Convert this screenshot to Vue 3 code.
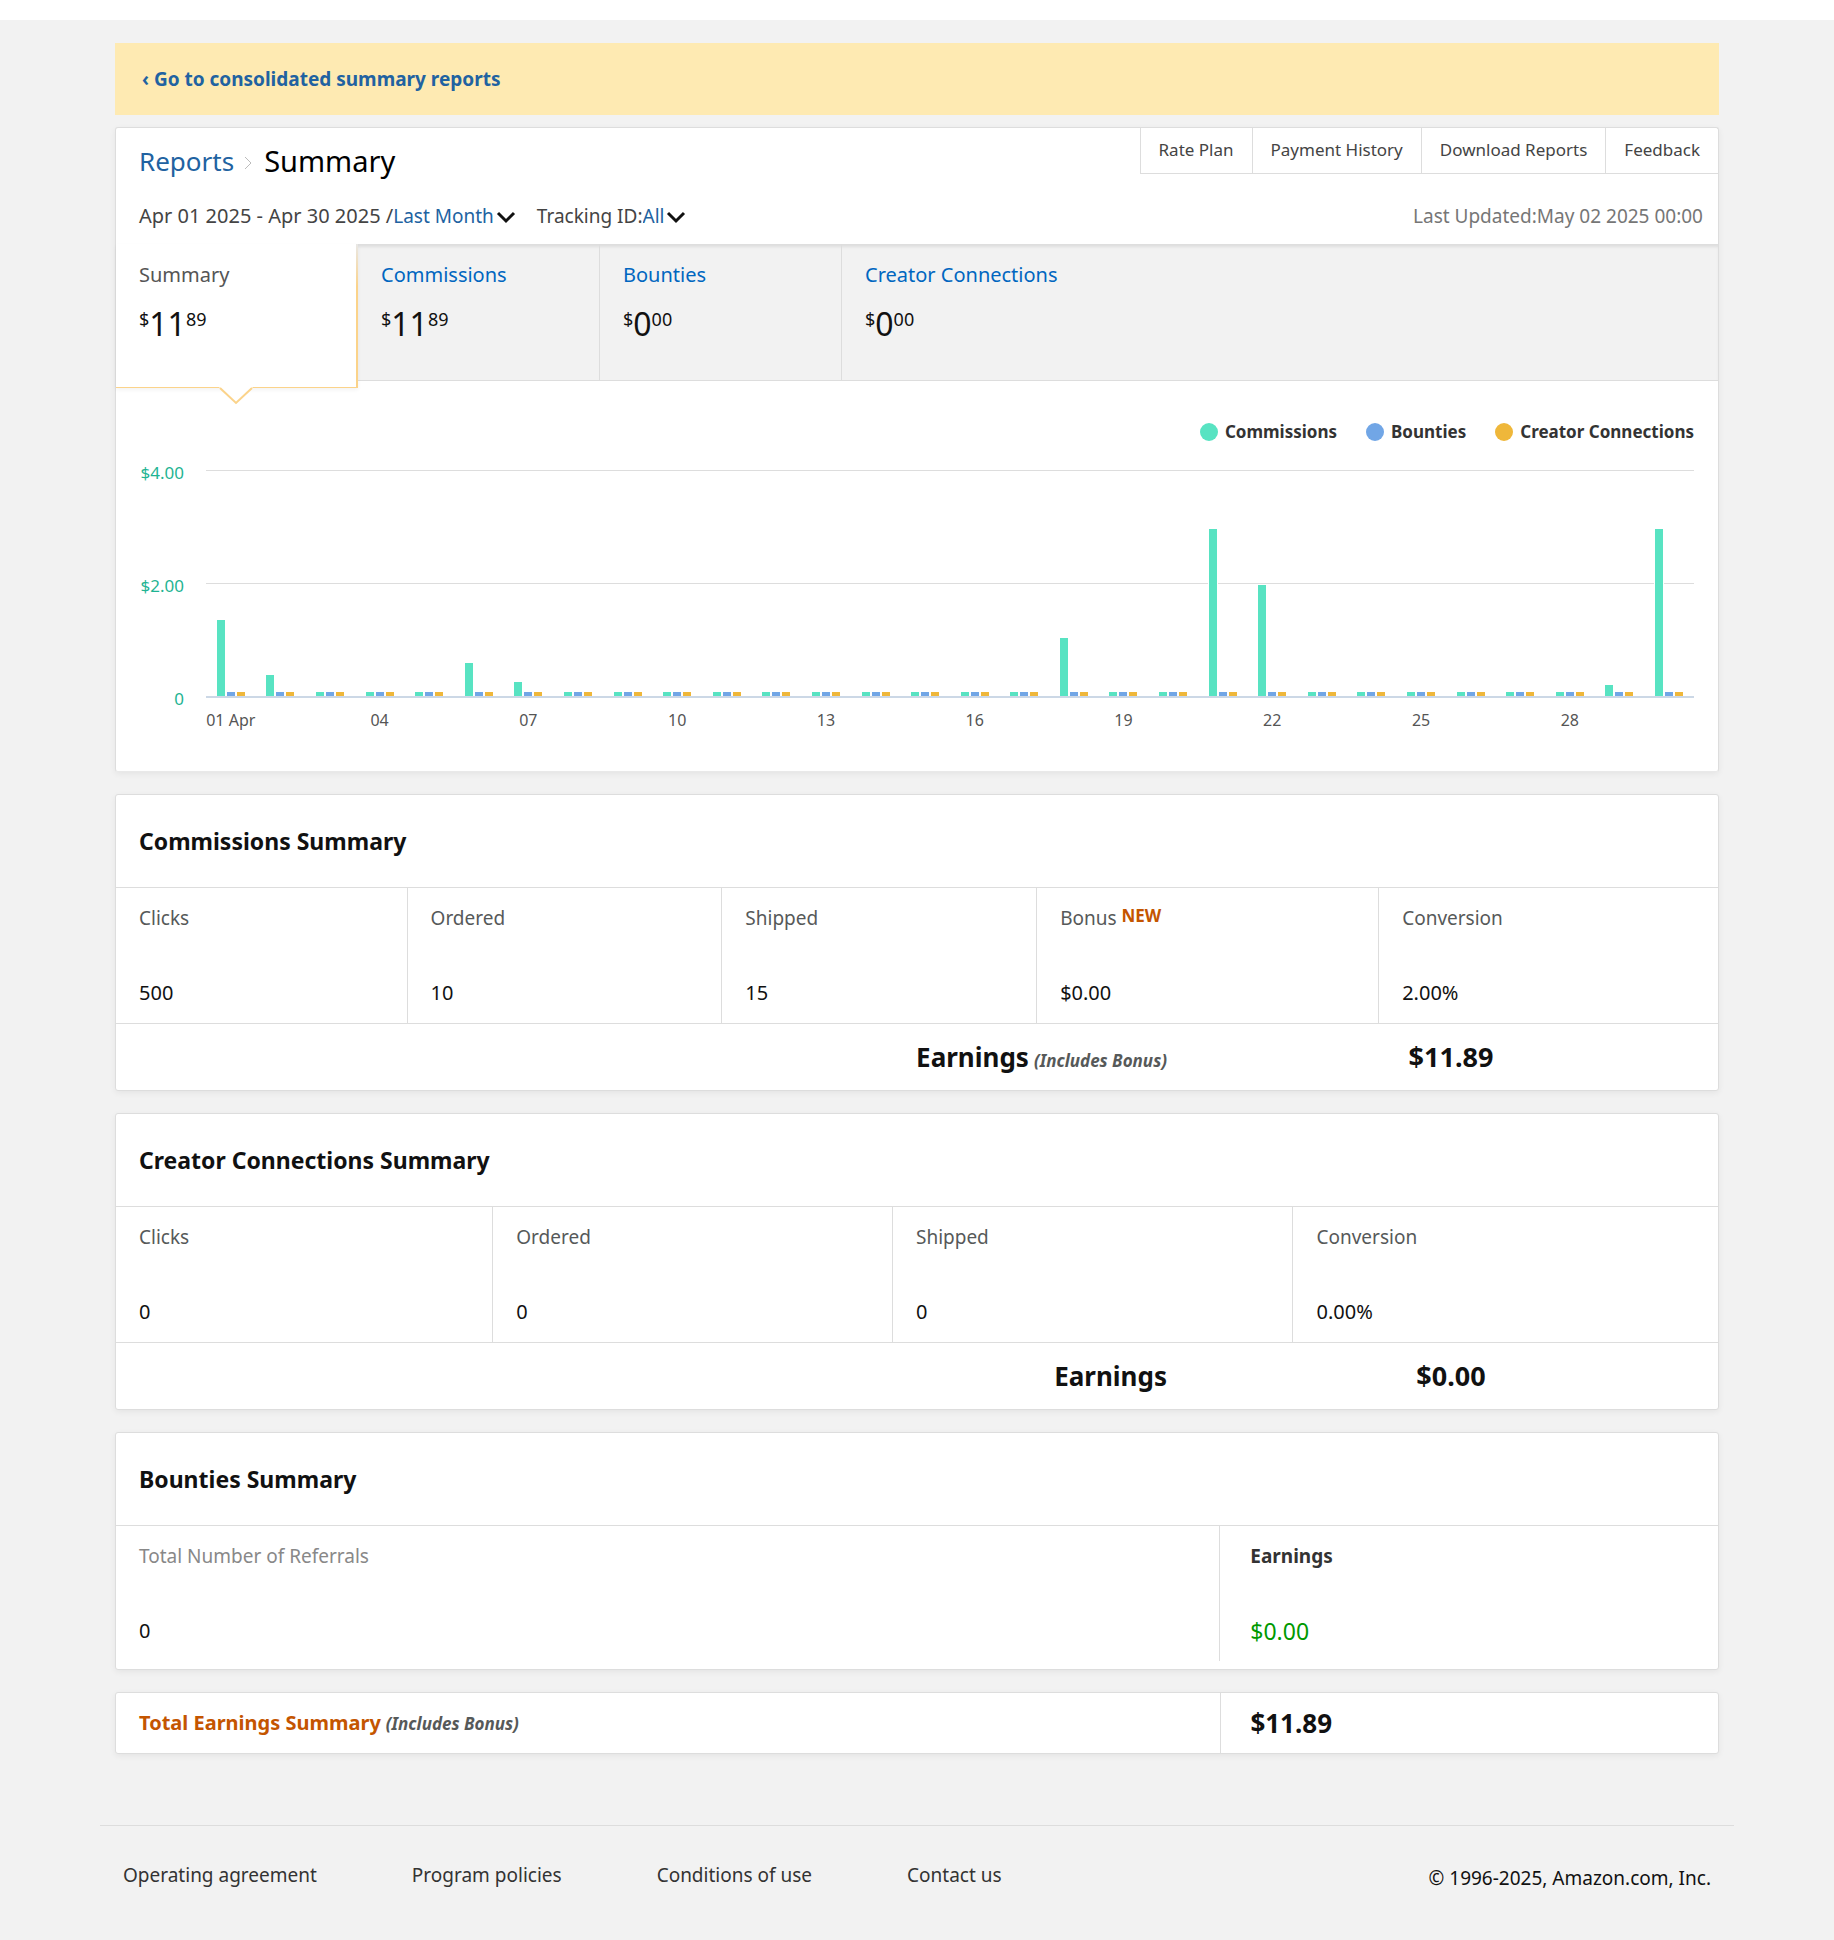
<template>
  <div class="page">
    <div class="banner">
      <a href="#">‹ Go to consolidated summary reports</a>
    </div>

    <section class="card report">
      <div class="report-header">
        <h1 class="breadcrumb">
          <a href="#">Reports</a>
          <svg class="separator" viewBox="0 0 8 14" width="8" height="14">
            <path d="M1 1 L7 7 L1 13" fill="none" stroke="#bbb" stroke-width="1" />
          </svg>
          <span>Summary</span>
        </h1>
        <nav class="report-nav">
          <a v-for="item in navItems" :key="item" href="#">{{ item }}</a>
        </nav>
      </div>

      <div class="filters">
        <label for="period" class="period-label">Apr 01 2025 - Apr 30 2025 /</label>
        <select id="period" v-model="period">
          <option>Last Month</option>
          <option>Yesterday</option>
        </select>
        <svg class="chevron" viewBox="0 0 20 14" width="20" height="14">
          <path d="M2 2 L10 10 L18 2" />
        </svg>
        <label for="tracking" class="tracking-label">Tracking ID:</label>
        <select id="tracking" v-model="trackingId">
          <option>All</option>
        </select>
        <svg class="chevron" viewBox="0 0 20 14" width="20" height="14">
          <path d="M2 2 L10 10 L18 2" />
        </svg>
        <span class="updated">Last Updated:May 02 2025 00:00</span>
      </div>

      <div class="tabs">
        <a
          v-for="tab in tabs"
          :key="tab.label"
          href="#"
          class="tab"
          :class="{ active: tab.label === activeTab }"
          @click.prevent="activeTab = tab.label"
        >
          <span class="tab-label">{{ tab.label }}</span>
          <span class="amount">
            <span class="small">$</span><span>{{ tab.whole }}</span><span class="small">{{ tab.cents }}</span>
          </span>
          <svg v-if="tab.label === activeTab" class="pointer" viewBox="0 0 34 18" width="34" height="18">
            <path d="M0 0 L17 17 L34 0 Z" fill="#fff" />
            <path d="M1 1 L17 16 L33 1" fill="none" stroke="#fbd38a" stroke-width="2" />
          </svg>
        </a>
      </div>

      <div class="chart">
        <ul class="legend">
          <li v-for="s in series" :key="s.name">
            <span class="dot" :class="s.color"></span>{{ s.name }}
          </li>
        </ul>
        <div class="chart-body">
          <div class="y-axis">
            <span>$4.00</span>
            <span>$2.00</span>
            <span>0</span>
          </div>
          <div class="plot">
            <div class="bars">
              <div v-for="(value, i) in dailyCommissions" :key="i" class="day">
                <span class="bar green" :style="{ height: barHeight(value) }"></span>
                <span class="bar blue"></span>
                <span class="bar yellow"></span>
              </div>
            </div>
          </div>
          <div class="x-axis">
            <span v-for="(value, i) in dailyCommissions" :key="i">{{ dayLabel(i) }}</span>
          </div>
        </div>
      </div>
    </section>

    <section v-for="summary in summaries" :key="summary.title" class="card">
      <h2>{{ summary.title }}</h2>
      <table>
        <colgroup>
          <col v-for="c in summary.columns" :key="c.label" :style="{ width: c.width }" />
        </colgroup>
        <thead>
          <tr>
            <th v-for="c in summary.columns" :key="c.label" scope="col">
              {{ c.label }} <span v-if="c.isNew" class="new">NEW</span>
            </th>
          </tr>
        </thead>
        <tbody>
          <tr>
            <td v-for="c in summary.columns" :key="c.label">{{ c.value }}</td>
          </tr>
        </tbody>
      </table>
      <div class="earnings">
        <div class="earnings-label">Earnings<em v-if="summary.bonus">(Includes Bonus)</em></div>
        <div class="earnings-value">{{ summary.earnings }}</div>
      </div>
    </section>

    <section class="card bounties">
      <h2>Bounties Summary</h2>
      <table>
        <thead>
          <tr>
            <th scope="col" class="referrals">Total Number of Referrals</th>
            <th scope="col" class="bounty-earnings">Earnings</th>
          </tr>
        </thead>
        <tbody>
          <tr>
            <td>0</td>
            <td class="bounty-value">$0.00</td>
          </tr>
        </tbody>
      </table>
    </section>

    <section class="card total">
      <div class="total-label">Total Earnings Summary<em>(Includes Bonus)</em></div>
      <div class="total-value">$11.89</div>
    </section>

    <footer>
      <nav>
        <a v-for="link in footerLinks" :key="link" href="#">{{ link }}</a>
      </nav>
      <span class="copyright">© 1996-2025, Amazon.com, Inc.</span>
    </footer>
  </div>
</template>

<script setup>
import { ref } from 'vue'

const period = ref('Last Month')
const trackingId = ref('All')
const activeTab = ref('Summary')

const navItems = ['Rate Plan', 'Payment History', 'Download Reports', 'Feedback']
const footerLinks = ['Operating agreement', 'Program policies', 'Conditions of use', 'Contact us']

const tabs = [
  { label: 'Summary', whole: '11', cents: '89' },
  { label: 'Commissions', whole: '11', cents: '89' },
  { label: 'Bounties', whole: '0', cents: '00' },
  { label: 'Creator Connections', whole: '0', cents: '00' }
]

const series = [
  { name: 'Commissions', color: 'green' },
  { name: 'Bounties', color: 'blue' },
  { name: 'Creator Connections', color: 'yellow' }
]

const dailyCommissions = [
  1.34, 0.38, 0, 0, 0, 0.59, 0.25, 0, 0, 0, 0, 0, 0, 0, 0,
  0, 0, 1.02, 0, 0, 2.95, 1.97, 0, 0, 0, 0, 0, 0, 0.19, 2.95
]
const maxValue = 4

const barHeight = (value) => `${(value / maxValue) * 100}%`

// one label every three days, the first one carries the month
const dayLabel = (i) => {
  if (i % 3 !== 0) return ''
  const day = String(i + 1).padStart(2, '0')
  return i === 0 ? `${day} Apr` : day
}

const summaries = [
  {
    title: 'Commissions Summary',
    earnings: '$11.89',
    bonus: true,
    columns: [
      { label: 'Clicks', value: '500', width: '18.2%' },
      { label: 'Ordered', value: '10', width: '19.65%' },
      { label: 'Shipped', value: '15', width: '19.65%' },
      { label: 'Bonus', value: '$0.00', width: '21.35%', isNew: true },
      { label: 'Conversion', value: '2.00%', width: '21.15%' }
    ]
  },
  {
    title: 'Creator Connections Summary',
    earnings: '$0.00',
    bonus: false,
    columns: [
      { label: 'Clicks', value: '0', width: '23.55%' },
      { label: 'Ordered', value: '0', width: '24.95%' },
      { label: 'Shipped', value: '0', width: '25%' },
      { label: 'Conversion', value: '0.00%', width: '26.5%' }
    ]
  }
]
</script>

<style>
body {
  margin: 0;
  background: #f2f2f2;
}
</style>

<style scoped>
.page {
  border-top: 20px solid #fff;
  padding: 23px 100px 52px;
  font-family: 'Noto Sans', 'Open Sans', sans-serif;
  font-size: 19px;
  line-height: 26px;
  color: #111;
}

a {
  color: #2162a1;
  text-decoration: none;
}

.banner {
  margin: 0 15px 12px;
  padding: 23px 27px;
  background: #feeab2;
  font-weight: bold;
}

.card {
  margin: 0 15px 22px;
  background: #fff;
  border: 1px solid #ddd;
  border-radius: 3px;
  box-shadow: 0 2px 6px rgba(0, 0, 0, 0.06);
}

.report {
  border-bottom-color: #e9e9e9;
}

.report-header {
  display: flex;
  justify-content: space-between;
  align-items: flex-start;
}

.breadcrumb {
  display: flex;
  align-items: center;
  margin: 13px 0 0 23px;
  font-size: 29px;
  font-weight: normal;
  line-height: 40px;
  color: #000;
}

.breadcrumb a {
  font-size: 26px;
}

.separator {
  margin: 3px 12px 0 10px;
}

.report-nav {
  display: flex;
  border-left: 1px solid #ddd;
  border-bottom: 1px solid #ddd;
}

.report-nav a {
  padding: 9px 18px 10px;
  font-size: 17px;
  color: #444;
}

.report-nav a + a {
  border-left: 1px solid #ddd;
}

.filters {
  display: flex;
  align-items: center;
  padding: 20px 15px 13px 23px;
  line-height: 30px;
  color: #444;
}

.filters select {
  appearance: none;
  field-sizing: content;
  border: none;
  padding: 0;
  background: transparent;
  font: inherit;
  color: #2162a1;
  cursor: pointer;
}

.period-label {
  font-size: 20px;
}

.chevron {
  margin: 4px 0 0 2px;
  fill: none;
  stroke: #111;
  stroke-width: 3;
  pointer-events: none;
}

.tracking-label {
  margin-left: 21px;
}

.updated {
  margin-left: auto;
  color: #767676;
}

.tabs {
  display: flex;
  align-items: flex-start;
  background: #f2f2f2;
  border-bottom: 1px solid #ddd;
  box-shadow: inset 0 4px 3px -1px #ddd;
}

.tab {
  box-sizing: border-box;
  width: 242px;
  padding: 18px 23px 36px;
  border-right: 1px solid #ddd;
  font-size: 20px;
  color: #0066c0;
}

.tab:last-child {
  width: auto;
  border-right: none;
}

.tab.active {
  position: relative;
  margin-bottom: -8px;
  padding-bottom: 43px;
  background: #fff;
  border: solid;
  border-width: 0 2px 1px 0;
  border-image: linear-gradient(to bottom, #e8e8e8, #fbd38a 30%, #fbd38a) 1;
  box-shadow: 0 2px 4px rgba(0, 0, 0, 0.05);
  color: #555;
}

.tab-label {
  display: block;
}

.amount {
  display: flex;
  align-items: flex-start;
  margin-top: 16px;
  font-size: 32px;
  line-height: 40px;
  color: #111;
}

.small {
  font-size: 18px;
  line-height: 30px;
}

.pointer {
  position: absolute;
  left: 103px;
  top: 100%;
}

.chart {
  padding: 39px 24px 39px 0;
  font-size: 17px;
  line-height: 24px;
}

.legend {
  display: flex;
  justify-content: flex-end;
  gap: 29px;
  margin: 0 0 26px;
  padding: 0;
  list-style: none;
  font-weight: bold;
  color: #333;
}

.legend li {
  display: flex;
  align-items: center;
  gap: 7px;
}

.dot {
  width: 18px;
  height: 18px;
  border-radius: 50%;
}

.green {
  background: #58e3c2;
}

.blue {
  background: #71a6e6;
}

.yellow {
  background: #efb73a;
}

.chart-body {
  display: grid;
  grid-template-columns: 90px 1fr;
}

.y-axis {
  display: flex;
  flex-direction: column;
  justify-content: space-between;
  align-items: flex-end;
  margin: -9px 22px -13px 0;
  color: #1fb493;
}

.plot {
  height: 226px;
  border-bottom: 2px solid #ccd8e6;
  background:
    linear-gradient(#ddd, #ddd) 0 0 / 100% 1px no-repeat,
    linear-gradient(#ddd, #ddd) 0 50% / 100% 1px no-repeat;
}

.bars {
  display: flex;
  height: 100%;
  overflow: hidden;
}

.day {
  flex: 1;
  display: flex;
  justify-content: center;
  align-items: flex-end;
  gap: 2px;
}

.bar {
  width: 8px;
  min-height: 4px;
  box-shadow: 0 0 0 1px #fff;
}

.x-axis {
  grid-column: 2;
  display: flex;
  margin-top: 10px;
  font-size: 16px;
  color: #555;
}

.x-axis span {
  flex: 1 1 0;
  display: flex;
  justify-content: center;
  width: 0;
  white-space: nowrap;
}

h2 {
  margin: 0;
  padding: 30px 23px;
  font-size: 23px;
  line-height: 32px;
}

table {
  width: 100%;
  border-top: 1px solid #ddd;
  border-spacing: 0;
  table-layout: fixed;
}

th,
td {
  border-right: 1px solid #ddd;
  text-align: left;
}

th:last-child,
td:last-child {
  border-right: none;
}

th {
  padding: 17px 23px 0;
  font-weight: normal;
  color: #565959;
}

td {
  padding: 49px 23px 17px;
  font-size: 20px;
}

.new {
  position: relative;
  top: -3px;
  font-size: 17px;
  font-weight: bold;
  line-height: 20px;
  color: #c45500;
}

em {
  margin-left: 5px;
  font-size: 17px;
  font-weight: bold;
  line-height: 20px;
  color: #565959;
}

.earnings {
  display: grid;
  grid-template-columns: 2fr 1fr;
  padding: 16px 0;
  border-top: 1px solid #ddd;
  font-size: 26px;
  font-weight: bold;
  line-height: 34px;
}

.earnings-label {
  padding-right: 17px;
  text-align: right;
}

.earnings-value {
  font-size: 27px;
  text-align: center;
}

.bounties {
  padding-bottom: 8px;
}

.referrals {
  width: 66%;
  color: #888;
}

.bounty-earnings,
.bounty-value {
  padding-left: 30px;
}

.bounty-earnings {
  font-weight: bold;
  color: #333;
}

.bounty-value {
  font-size: 23px;
  color: #090;
}

.total {
  display: flex;
  font-weight: bold;
  line-height: 60px;
}

.total-label {
  box-sizing: border-box;
  width: 69%;
  padding-left: 23px;
  border-right: 1px solid #ddd;
  font-size: 20px;
  color: #c45500;
}

.total-value {
  padding-left: 29px;
  font-size: 26px;
}

footer {
  display: flex;
  justify-content: space-between;
  margin-top: 71px;
  padding: 36px 23px 0;
  border-top: 1px solid #ddd;
}

footer nav {
  display: flex;
  gap: 95px;
}

footer a {
  color: #333;
}

.copyright {
  margin-top: 3px;
}
</style>
